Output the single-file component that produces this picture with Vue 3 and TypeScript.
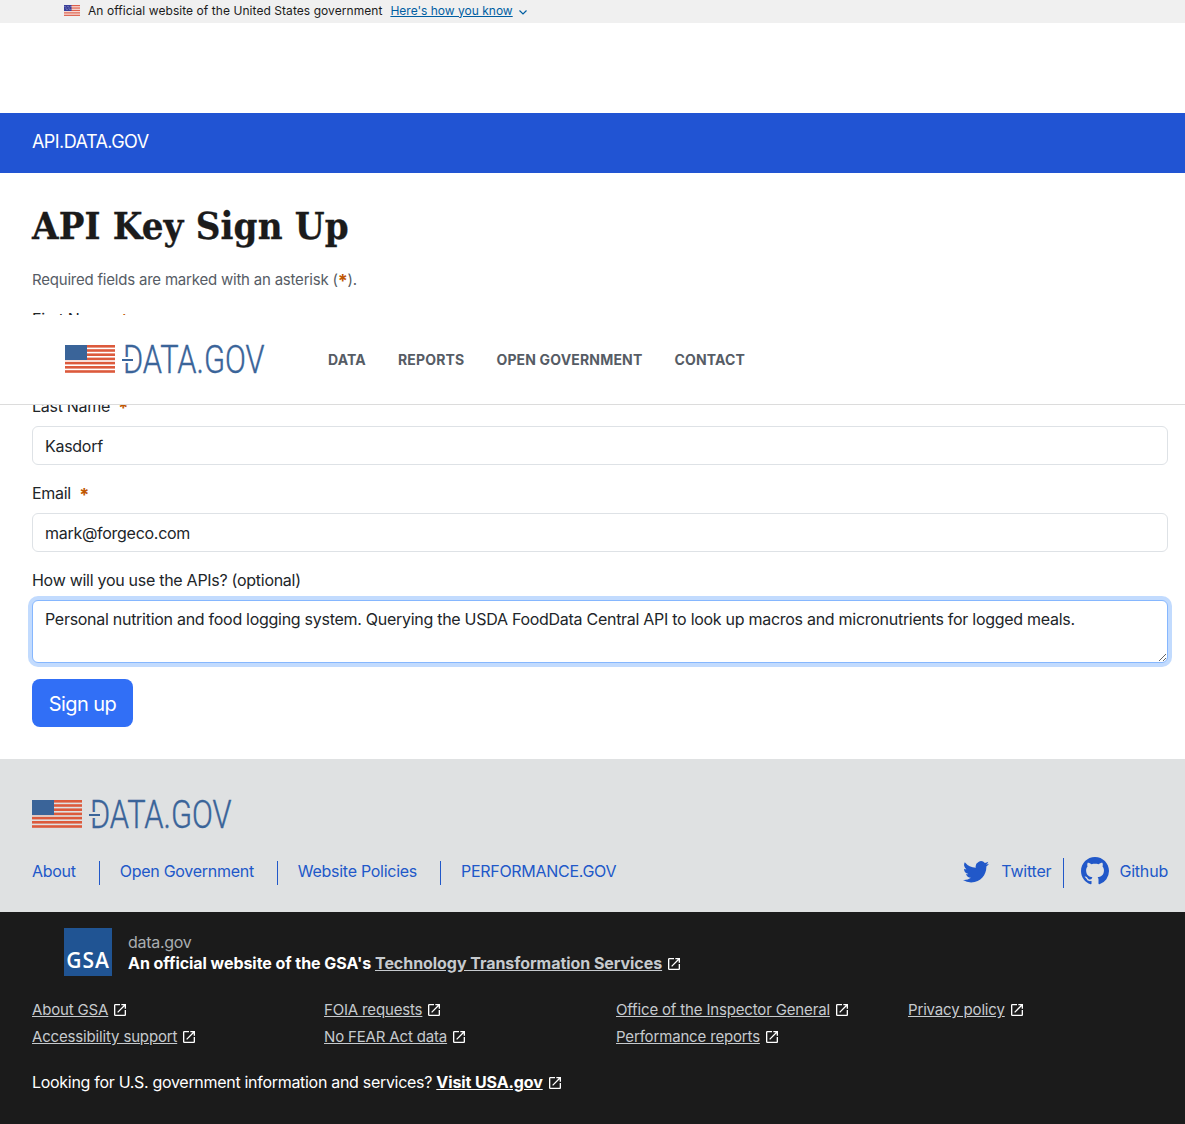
<script setup lang="ts">
//フォーム項目
const fields = [
  { label: "First Name", value: "Mark" },
  { label: "Last Name", value: "Kasdorf" },
  { label: "Email", value: "mark@forgeco.com" },
];
const navItems = ["DATA", "REPORTS", "OPEN GOVERNMENT", "CONTACT"];
const footerLinks = ["About", "Open Government", "Website Policies", "PERFORMANCE.GOV"];
const gsaLinks = [
  "About GSA",
  "FOIA requests",
  "Office of the Inspector General",
  "Privacy policy",
  "Accessibility support",
  "No FEAR Act data",
  "Performance reports",
];
const useText =
  "Personal nutrition and food logging system. Querying the USDA FoodData Central API to look up macros and micronutrients for logged meals.";
//旗のストライプ
const stripes = [0, 1, 2, 3, 4, 5, 6];
const launch =
  "M19 19H5V5h7V3H5a2 2 0 0 0-2 2v14a2 2 0 0 0 2 2h14c1.1 0 2-.9 2-2v-7h-2v7zM14 3v2h3.59l-9.83 9.83 1.41 1.41L19 6.41V10h2V3h-7z";
</script>
<template>
  <div class="page">
    <div class="gov-banner">
      <svg class="mini-flag" width="16" height="11" viewBox="0 0 16 11">
        <rect width="16" height="11" fill="#fff" />
        <rect v-for="s in stripes" :key="s" y="0" :transform="`translate(0 ${s * 1.7})`" width="16" height="0.85" fill="#d8442c" />
        <rect width="7.5" height="6" fill="#3a3f9a" />
        <circle v-for="s in stripes" :key="s" :cx="1 + s" :cy="1.5 + (s % 3) * 1.5" r="0.4" fill="#fff" />
      </svg>
      <span class="official-note">An official website of the United States government</span>
      <a class="know" href="#">Here's how you know</a>
      <svg width="10" height="10" viewBox="0 0 10 10" class="chev">
        <path d="M1.5 3.5 5 7l3.5-3.5" fill="none" stroke="#005ea2" stroke-width="1.2" />
      </svg>
    </div>
    <div class="spacer"></div>
    <div class="api-bar">API.DATA.GOV</div>

    <main class="content">
      <h1>API Key Sign Up</h1>
      <p class="required">Required fields are marked with an asterisk (<span class="star">*</span>).</p>
      <form @submit.prevent>
        <div v-for="f in fields" :key="f.label" class="field">
          <label>{{ f.label }} <span class="star mark">*</span></label>
          <input type="text" :value="f.value" />
        </div>
        <div class="field">
          <label>How will you use the APIs? (optional)</label>
          <textarea class="focused" rows="2" :value="useText"></textarea>
        </div>
        <button type="submit" class="signup">Sign up</button>
      </form>
    </main>

    <!-- スクロール時に重なるヘッダー -->
    <nav class="sticky-nav">
      <svg class="logo" width="240" height="32" viewBox="0 0 240 32">
        <rect v-for="s in stripes" :key="s" x="0" :y="1 + s * 4.2" width="50" height="2.6" fill="#dc5a3c" />
        <rect y="1" width="22" height="15" fill="#3a6499" />
        <text class="logo-text" transform="translate(58 29) scale(0.81 1)">DATA.GOV</text>
        <rect x="59" y="13" width="6" height="6" fill="#fff" />
        <rect x="57" y="15" width="11" height="2" fill="#3a6499" />
      </svg>
      <ul>
        <li v-for="n in navItems" :key="n">{{ n }}</li>
      </ul>
    </nav>

    <footer class="site-footer">
      <svg class="logo" width="240" height="32" viewBox="0 0 240 32">
        <rect v-for="s in stripes" :key="s" x="0" :y="1 + s * 4.2" width="50" height="2.6" fill="#dc5a3c" />
        <rect y="1" width="22" height="15" fill="#3a6499" />
        <text class="logo-text" transform="translate(58 29) scale(0.81 1)">DATA.GOV</text>
        <rect x="59" y="13" width="6" height="6" fill="#dfe1e2" />
        <rect x="57" y="15" width="11" height="2" fill="#3a6499" />
      </svg>
      <div class="footer-row">
        <div class="footer-links">
          <a v-for="l in footerLinks" :key="l" href="#">{{ l }}</a>
        </div>
        <div class="social">
          <a href="#">
            <svg width="26" height="26" viewBox="0 0 16 16" fill="#2158c9">
              <path d="M5.026 15c6.038 0 9.341-5.003 9.341-9.334 0-.14 0-.282-.006-.422A6.685 6.685 0 0 0 16 3.542a6.658 6.658 0 0 1-1.889.518 3.301 3.301 0 0 0 1.447-1.817 6.533 6.533 0 0 1-2.087.793A3.286 3.286 0 0 0 7.875 6.03a9.325 9.325 0 0 1-6.767-3.429 3.289 3.289 0 0 0 1.018 4.382A3.323 3.323 0 0 1 .64 6.575v.045a3.288 3.288 0 0 0 2.632 3.218 3.203 3.203 0 0 1-.865.115 3.23 3.23 0 0 1-.614-.057 3.283 3.283 0 0 0 3.067 2.277A6.588 6.588 0 0 1 .78 13.58a6.32 6.32 0 0 1-.78-.045A9.344 9.344 0 0 0 5.026 15z" />
            </svg>
            Twitter
          </a>
          <a href="#">
            <svg width="28" height="28" viewBox="0 0 16 16" fill="#2158c9">
              <path d="M8 0C3.58 0 0 3.58 0 8c0 3.54 2.29 6.53 5.47 7.59.4.07.55-.17.55-.38 0-.19-.01-.82-.01-1.49-2.01.37-2.53-.49-2.69-.94-.09-.23-.48-.94-.82-1.13-.28-.15-.68-.52-.01-.53.63-.01 1.08.58 1.23.82.72 1.21 1.87.87 2.33.66.07-.52.28-.87.51-1.07-1.78-.2-3.64-.89-3.64-3.95 0-.87.31-1.59.82-2.15-.08-.2-.36-1.02.08-2.12 0 0 .67-.21 2.2.82.64-.18 1.32-.27 2-.27.68 0 1.36.09 2 .27 1.53-1.04 2.2-.82 2.2-.82.44 1.1.16 1.92.08 2.12.51.56.82 1.27.82 2.15 0 3.07-1.87 3.75-3.65 3.95.29.25.54.73.54 1.48 0 1.07-.01 1.93-.01 2.2 0 .21.15.46.55.38A8.013 8.013 0 0 0 16 8c0-4.42-3.58-8-8-8z" />
            </svg>
            Github
          </a>
        </div>
      </div>
    </footer>

    <footer class="identifier">
      <div class="identity">
        <div class="gsa-logo"><span>GSA</span></div>
        <div>
          <div class="domain">data.gov</div>
          <div class="official">
            An official website of the GSA's <a href="#">Technology Transformation Services</a>
            <svg class="ext" width="16" height="16" viewBox="0 0 24 24" fill="#fff"><path :d="launch" /></svg>
          </div>
        </div>
      </div>
      <div class="gsa-grid">
        <div v-for="l in gsaLinks" :key="l">
          <a href="#">{{ l }}</a>
          <svg class="ext" width="16" height="16" viewBox="0 0 24 24" fill="#fff"><path :d="launch" /></svg>
        </div>
      </div>
      <div class="looking">
        Looking for U.S. government information and services? <a href="#">Visit USA.gov</a>
        <svg class="ext" width="16" height="16" viewBox="0 0 24 24" fill="#fff"><path :d="launch" /></svg>
      </div>
    </footer>
  </div>
</template>
<style scoped>
.page {
  position: relative;
  font-family: Inter, "Liberation Sans", sans-serif;
  font-size: 16px;
  line-height: 24px;
  letter-spacing: -0.28px;
  color: #212529;
  overflow: hidden;
}
.gov-banner {
  height: 23px;
  box-sizing: border-box;
  padding: 0 0 2px 64px;
  background: #f0f0f0;
  display: flex;
  align-items: center;
  font-size: 12px;
  letter-spacing: 0;
  color: #1b1b1b;
}
.official-note {
  letter-spacing: 0.06px;
}
.mini-flag {
  margin-right: 8px;
}
.know {
  margin-left: 8px;
  color: #005ea2;
}
.chev {
  margin-left: 5px;
  margin-top: 2px;
}
.spacer {
  height: 90px;
}
.api-bar {
  height: 60px;
  line-height: 58px;
  background: #2154d3;
  color: #fff;
  font-size: 18px;
  letter-spacing: -0.55px;
  padding-left: 32px;
}
.content {
  padding: 32px 17px 32px 32px;
}
h1 {
  margin: 0 0 16px;
  height: 47px;
  line-height: 42px;
  font-family: "DejaVu Serif Condensed", "DejaVu Serif", "Liberation Serif", serif;
  font-size: 38px;
  letter-spacing: 0.14px;
  font-weight: 700;
  -webkit-text-stroke: 0.3px #1b1b1b;
  color: #1b1b1b;
}
.required {
  margin: 0 0 15px;
  font-size: 15px;
  letter-spacing: -0.21px;
  color: #565c65;
}
.star {
  position: relative;
  top: 2px;
  color: #c05600;
  font-size: 18px;
  line-height: 1;
  font-weight: 700;
}
.mark {
  margin-left: 4px;
}
.field {
  margin-bottom: 16px;
}
.field label {
  display: block;
  margin-bottom: 8px;
}
.field input,
.field textarea {
  display: block;
  box-sizing: border-box;
  width: 100%;
  height: 39px;
  padding: 6px 12px;
  font: inherit;
  letter-spacing: inherit;
  color: #212529;
  background: #fff;
  border: 1px solid #dee2e6;
  border-radius: 6px;
  outline: none;
}
.field textarea.focused {
  height: 63px;
  border-color: #86b7fe;
  box-shadow: 0 0 0 4px rgba(13, 110, 253, 0.25);
}
.signup {
  display: block;
  height: 48px;
  width: 101px;
  padding: 1px 0 0;
  border: none;
  border-radius: 8px;
  background: #316ff6;
  color: #fff;
  font-family: inherit;
  font-size: 20px;
  letter-spacing: -0.6px;
}
.sticky-nav {
  position: absolute;
  top: 315px;
  left: 0;
  right: 0;
  height: 90px;
  box-sizing: border-box;
  background: #fff;
  border-bottom: 1px solid #dcdcdc;
  padding-left: 65px;
  display: flex;
  align-items: center;
}
.sticky-nav ul {
  display: flex;
  gap: 32px;
  list-style: none;
  margin: 0 0 0 23px;
  padding: 0;
  font-size: 14px;
  font-weight: 700;
  letter-spacing: 0.17px;
  color: #565c65;
}
.logo-text {
  font-family: "Roboto", "Liberation Sans", sans-serif;
  font-weight: 300;
  font-size: 38px;
  letter-spacing: 0;
  fill: #3a6499;
  stroke: #3a6499;
  stroke-width: 0.4px;
}
.site-footer {
  height: 153px;
  box-sizing: border-box;
  background: #dfe1e2;
  padding: 40px 17px 0 32px;
}
.site-footer .logo {
  display: block;
}
.footer-row {
  display: flex;
  justify-content: space-between;
  align-items: flex-start;
  margin-top: 30px;
}
.footer-links {
  display: flex;
}
.footer-links a {
  color: #2158c9;
  text-decoration: none;
  line-height: 21px;
  padding: 0 23px 3px 20px;
  border-left: 1px solid #2158c9;
}
.footer-links a:first-child {
  padding-left: 0;
  border-left: none;
}
.social {
  display: flex;
  margin-top: -3px;
}
.social a {
  display: flex;
  align-items: center;
  gap: 10px;
  height: 30px;
  box-sizing: border-box;
  padding-bottom: 4px;
  letter-spacing: -0.2px;
  color: #2158c9;
  text-decoration: none;
}
.social a:first-child {
  gap: 12px;
  padding-right: 12px;
  margin-right: 17px;
  border-right: 1px solid #2158c9;
}
.identifier {
  height: 212px;
  box-sizing: border-box;
  background: #1b1b1b;
  padding: 16px 17px 0 32px;
  color: #fff;
}
.identity {
  display: flex;
  align-items: center;
  gap: 16px;
  padding-left: 32px;
}
.gsa-logo {
  width: 48px;
  height: 48px;
  background: #205493;
  color: #fff;
  display: flex;
  align-items: flex-end;
  justify-content: center;
  font-size: 21px;
  line-height: 32px;
  font-family: "Open Sans", sans-serif;
  font-weight: 600;
  letter-spacing: 1px;
}
.domain {
  color: #a9aeb1;
  line-height: 21px;
  padding-top: 1px;
}
.official {
  font-weight: 700;
  letter-spacing: -0.05px;
  line-height: 21px;
}
.official a {
  color: #c6cace;
}
.gsa-grid {
  display: grid;
  grid-template-columns: repeat(4, 292px);
  margin-top: 22px;
  row-gap: 3px;
  font-size: 15px;
  letter-spacing: -0.16px;
}
.gsa-grid a {
  color: #c6cace;
}
.ext {
  vertical-align: -3px;
  margin-left: 4px;
}
.looking {
  margin-top: 21px;
  letter-spacing: -0.3px;
}
.looking a {
  color: #fff;
  font-weight: 700;
  letter-spacing: -0.1px;
}
</style>
<style>
html,
body {
  margin: 0;
  background: #fff;
}
</style>
